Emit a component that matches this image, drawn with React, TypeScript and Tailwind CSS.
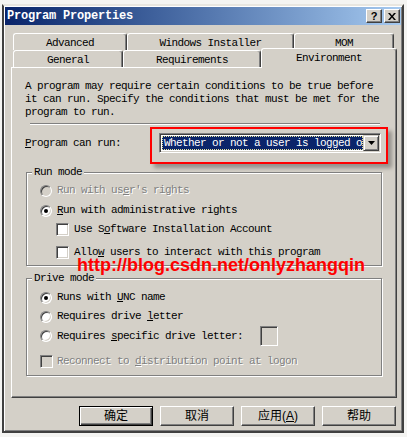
import React from 'react';

const mono = "font-['Liberation_Mono','Noto_Sans_CJK_SC',monospace] text-[11px] tracking-[-0.6px] leading-[13px]";
const cjk = "font-['Liberation_Sans','Noto_Sans_CJK_SC',sans-serif] text-[12px] leading-[14px]";
const dim = 'text-[#808080] [text-shadow:1px_1px_0_#ffffff]';

function Radio({ checked = false, disabled = false }: { checked?: boolean; disabled?: boolean }) {
  return (
    <span
      className={`w-[12px] h-[12px] shrink-0 rounded-full flex items-center justify-center border border-t-[#808080] border-l-[#808080] border-r-white border-b-white shadow-[inset_1px_1px_0_#404040,inset_-1px_-1px_0_#d4d0c8] ${
        disabled ? 'bg-[#d4d0c8]' : 'bg-white'
      }`}
    >
      {checked && <span className="w-[4px] h-[4px] rounded-full bg-black" />}
    </span>
  );
}

function Check({ disabled = false }: { disabled?: boolean }) {
  return (
    <span
      className={`w-[13px] h-[13px] shrink-0 border border-t-[#808080] border-l-[#808080] border-r-white border-b-white shadow-[inset_1px_1px_0_#404040,inset_-1px_-1px_0_#d4d0c8] ${
        disabled ? 'bg-[#d4d0c8]' : 'bg-white'
      }`}
    />
  );
}

function Tab({ w, label, row2 = false }: { w: string; label: string; row2?: boolean }) {
  return (
    <div
      className={`${w} h-[17px] shrink-0 bg-[#d4d0c8] border-l border-t border-r border-l-white border-t-white border-r-[#404040] rounded-t-[3px] shadow-[inset_-1px_0_0_#808080] flex items-center justify-center ${
        row2 ? 'pt-[3px]' : 'pt-[2px]'
      } ${mono}`}
    >
      {label}
    </div>
  );
}

function Btn({ children, def = false }: { children: React.ReactNode; def?: boolean }) {
  return (
    <div
      className={`w-[74px] h-[20px] flex items-center justify-center text-black ${cjk} ${
        def
          ? 'border border-black shadow-[inset_1px_1px_0_#ffffff,inset_-1px_-1px_0_#404040,inset_-2px_-2px_0_#808080]'
          : 'border border-t-white border-l-white border-r-[#404040] border-b-[#404040] shadow-[inset_-1px_-1px_0_#808080]'
      }`}
    >
      {children}
    </div>
  );
}

export default function App() {
  return (
    <div className="w-[407px] h-[437px] bg-[#f4f4f2] pt-[4px] pl-[2px] overflow-hidden">
      <div className="w-[402px] h-[429px] bg-[#d4d0c8] border-2 border-t-[#e8e6e0] border-l-[#404040] border-r-[#404040] border-b-[#404040] shadow-[inset_1px_1px_0_#ffffff,inset_-1px_-1px_0_#808080] text-black">
        {/* Title bar */}
        <div className="mx-[1px] mt-[1px] h-[18px] bg-linear-to-r from-[#0a246a] to-[#a6caf0] flex items-center justify-between pl-[2px] pr-[1px]">
          <span className="font-['Liberation_Mono',monospace] text-[12px] font-bold tracking-[-0.2px] text-white leading-[14px]">
            Program Properties
          </span>
          <div className="flex gap-[2px]">
            <div className="w-[16px] h-[14px] bg-[#d4d0c8] border border-t-white border-l-white border-r-[#404040] border-b-[#404040] shadow-[inset_-1px_-1px_0_#808080] flex items-center justify-center font-['Liberation_Sans',sans-serif] text-[11px] font-bold leading-[11px]">
              ?
            </div>
            <div className="w-[16px] h-[14px] bg-[#d4d0c8] border border-t-white border-l-white border-r-[#404040] border-b-[#404040] shadow-[inset_-1px_-1px_0_#808080] flex items-center justify-center">
              <svg width="8" height="7" viewBox="0 0 8 7">
                <path d="M0 0h2l2 2.5L6 0h2L5 3.5 8 7H6L4 4.5 2 7H0l3-3.5z" fill="#000" />
              </svg>
            </div>
          </div>
        </div>

        {/* Tabs */}
        <div className="mt-[8px] pl-[9px] flex">
          <Tab w="w-[114px]" label="Advanced" />
          <Tab w="w-[167px]" label="Windows Installer" />
          <Tab w="w-[100px]" label="MOM" />
        </div>
        <div className="pl-[9px] flex items-end h-[17px]">
          <Tab w="w-[110px]" label="General" row2 />
          <Tab w="w-[138px]" label="Requirements" row2 />
          <div
            className={`relative z-10 w-[136px] h-[20px] -mb-[1px] shrink-0 bg-[#d4d0c8] border-l border-t border-r border-l-white border-t-white border-r-[#404040] rounded-t-[3px] shadow-[inset_-1px_0_0_#808080] flex items-center justify-center ${mono}`}
          >
            Environment
          </div>
        </div>

        {/* Panel */}
        <div className="relative ml-[7px] w-[386px] h-[331px] border border-t-white border-l-white border-r-[#404040] border-b-[#404040] shadow-[inset_-1px_-1px_0_#808080] pl-[13px] pt-[12px]">
          <div className={mono}>
            <div>A program may require certain conditions to be true before</div>
            <div>it can run. Specify the conditions that must be met for the</div>
            <div>program to run.</div>
          </div>
          <div className="mt-[4px] ml-[5px] w-[350px] h-[2px] border-t border-t-[#808080] border-b border-b-white" />

          <div className="mt-[2px] flex items-start">
            <div className={`w-[125px] mt-[10px] ${mono}`}>
              <u>P</u>rogram can run:
            </div>
            <div className="w-[238px] h-[37px] border-2 border-[#ff0000] shadow-[4px_4px_4px_rgba(0,0,0,0.3)] pl-[7px] pt-[4px]">
              <div className="w-[222px] h-[20px] bg-white border border-t-[#808080] border-l-[#808080] border-r-white border-b-white shadow-[inset_1px_1px_0_#404040,inset_-1px_-1px_0_#d4d0c8] p-[1px] flex">
                <div className="flex-1 min-w-0 my-[1px] ml-[1px] bg-[#0a246a] border border-dotted border-[#e6e29a] overflow-hidden whitespace-nowrap text-white flex items-center pl-[1px]">
                  <span className={mono}>Whether or not a user is logged on</span>
                </div>
                <div className="w-[16px] h-full shrink-0 bg-[#d4d0c8] border border-t-[#d4d0c8] border-l-[#d4d0c8] border-r-[#404040] border-b-[#404040] shadow-[inset_1px_1px_0_#ffffff,inset_-1px_-1px_0_#808080] flex items-center justify-center">
                  <svg width="7" height="4" viewBox="0 0 7 4">
                    <path d="M0 0h7L3.5 4z" fill="#000" />
                  </svg>
                </div>
              </div>
            </div>
          </div>

          {/* Run mode */}
          <div className={`mt-[8px] ml-[1px] w-[356px] border border-[#808080] shadow-[1px_1px_0_#ffffff,inset_1px_1px_0_#ffffff] pb-[6px] ${mono}`}>
            <span className="block w-fit -mt-[7px] ml-[5px] px-[2px] bg-[#d4d0c8]">Run mode</span>
            <div className="mt-[5px] h-[13px] pl-[13px] flex items-center gap-[5px]">
              <Radio disabled />
              <span className={dim}>Run with us<u>e</u>r's rights</span>
            </div>
            <div className="mt-[7px] h-[13px] pl-[13px] flex items-center gap-[5px]">
              <Radio checked />
              <span><u>R</u>un with administrative rights</span>
            </div>
            <div className="mt-[6px] h-[13px] pl-[29px] flex items-center gap-[5px]">
              <Check />
              <span>Use S<u>o</u>ftware Installation Account</span>
            </div>
            <div className="mt-[10px] h-[13px] pl-[29px] flex items-center gap-[5px]">
              <Check />
              <span>Allo<u>w</u> users to interact with this program</span>
            </div>
          </div>

          {/* Drive mode */}
          <div className={`mt-[12px] ml-[1px] w-[356px] border border-[#808080] shadow-[1px_1px_0_#ffffff,inset_1px_1px_0_#ffffff] pb-[7px] ${mono}`}>
            <span className="block w-fit -mt-[7px] ml-[5px] px-[2px] bg-[#d4d0c8]">Drive mode</span>
            <div className="mt-[6px] h-[13px] pl-[13px] flex items-center gap-[5px]">
              <Radio checked />
              <span>Runs with <u>U</u>NC name</span>
            </div>
            <div className="mt-[6px] h-[13px] pl-[13px] flex items-center gap-[5px]">
              <Radio />
              <span>Requires drive <u>l</u>etter</span>
            </div>
            <div className="mt-[3px] h-[20px] pl-[13px] flex items-center gap-[5px]">
              <Radio />
              <span>Requires <u>s</u>pecific drive letter:</span>
              <span className="ml-[12px] w-[18px] h-[20px] bg-[#d4d0c8] border border-t-[#808080] border-l-[#808080] border-r-white border-b-white shadow-[inset_1px_1px_0_#404040,inset_-1px_-1px_0_#d4d0c8]" />
            </div>
            <div className="mt-[9px] h-[13px] pl-[13px] flex items-center gap-[4px]">
              <Check disabled />
              <span className={dim}>Reconnect to <u>d</u>istribution point at logon</span>
            </div>
          </div>

          {/* Watermark overlay */}
          <div className="absolute left-[65px] top-[191px] font-['Liberation_Sans',Arial,sans-serif] text-[18px] leading-[12px] font-bold text-[#ff0000] whitespace-nowrap">
            http://blog.csdn.net/onlyzhangqin
          </div>
        </div>

        {/* Buttons */}
        <div className="mt-[8px] pr-[6px] flex justify-end gap-[7px]">
          <Btn def>确定</Btn>
          <Btn>取消</Btn>
          <Btn>
            应用(<u>A</u>)
          </Btn>
          <Btn>帮助</Btn>
        </div>
      </div>
    </div>
  );
}
